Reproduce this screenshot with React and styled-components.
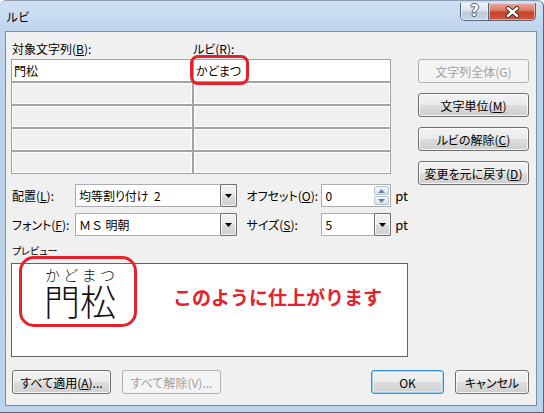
import React from "react";
import styled, { createGlobalStyle } from "styled-components";

const Global = createGlobalStyle`
  html, body { margin: 0; padding: 0; }
  body {
    width: 544px; height: 413px; overflow: hidden;
    font-family: "Noto Sans CJK JP", "Noto Sans", sans-serif;
    font-size: 12px; color: #000;
    font-feature-settings: "palt";
  }
  * { box-sizing: border-box; }
  u { text-underline-offset: 1px; }
`;

const Window = styled.div`
  width: 544px; height: 413px;
  display: flex; flex-direction: column;
  padding: 0 6px 6px 5px;
  border-top: 1px solid #8b9ab0;
  border-right: 1px solid #56667a;
  border-bottom: 1px solid #56667a;
  border-radius: 6px 6px 0 0;
  background: linear-gradient(180deg, #d0e1f4 0px, #bed5ee 30px, #b9d1ea 120px, #bcd3ec 100%);
`;

const TitleBar = styled.div`
  height: 30px; flex: none;
  display: flex; align-items: flex-start; justify-content: space-between;
`;

const TitleText = styled.div`
  padding: 6px 0 0 1px;
  line-height: 20px; font-size: 12px;
  font-feature-settings: normal;
  color: #000;
`;

const Caption = styled.div`
  margin: 2px 1px 0 0;
  height: 18px;
  display: flex;
  border: 1px solid #58677b;
  border-top: none;
  border-radius: 0 0 5px 5px;
  overflow: hidden;
`;

const CaptionButton = styled.div`
  width: ${(p) => p.$w}px;
  height: 100%;
  display: flex; align-items: center; justify-content: center;
  background: ${(p) =>
    p.$close
      ? "linear-gradient(180deg, #e9a99c 0%, #dc806c 40%, #c7452e 55%, #d0553c 100%)"
      : "linear-gradient(180deg, #eef3f9 0%, #d9e3ee 45%, #bccada 55%, #c9d6e4 100%)"};
  border-left: ${(p) => (p.$close ? "1px solid #58677b" : "none")};
  box-shadow: inset 0 0 0 1px rgba(255,255,255,0.45);
`;

const HelpGlyph = styled.span`
  font-family: "DejaVu Sans", sans-serif;
  font-weight: bold; font-size: 15px; line-height: 1;
  color: #fff;
  text-shadow: -1px 0 #4d5a6b, 1px 0 #4d5a6b, 0 -1px #4d5a6b, 0 1px #4d5a6b;
`;

const Body = styled.div`
  flex: 1;
  display: flex; flex-direction: column;
  border: 1px solid #7d8ea3;
  background: #f0f0f0;
  padding: 8px 7px 11px 5px;
`;

const Main = styled.div`
  display: flex;
`;

const LeftCol = styled.div`
  width: 397px;
  display: flex; flex-direction: column;
`;

const RightCol = styled.div`
  width: 111px; margin-left: 10px; margin-top: 19px;
  display: flex; flex-direction: column; gap: 10px;
`;

const HeaderLabels = styled.div`
  height: 19px; padding-left: 1px;
  display: grid; grid-template-columns: 181px 1fr;
  line-height: 17px;
`;

const Text = styled.span`
  white-space: nowrap;
`;

const RubyGrid = styled.div`
  width: 380px;
  display: grid;
  grid-template-columns: 180px 196px;
  grid-auto-rows: 21px;
  gap: 2px;
  border: 1px solid #a3a3a3;
  background: #a3a3a3;
`;

const Cell = styled.div`
  position: relative;
  display: flex; align-items: center;
  padding-left: 2px;
  background: ${(p) => (p.$active ? "#fff" : "#f0f0f0")};
  box-shadow: ${(p) => (p.$active ? "none" : "inset 0 0 0 1px #fff")};
`;

const Mark = styled.div`
  position: absolute;
  left: ${(p) => p.$l}px; top: ${(p) => p.$t}px;
  width: ${(p) => p.$w}px; height: ${(p) => p.$h}px;
  border: 3px solid #e5222b;
  border-radius: ${(p) => p.$r}px;
  pointer-events: none; z-index: 2;
`;

const Controls = styled.div`
  margin-top: 10px;
  display: flex; flex-direction: column; gap: 6px;
`;

const ControlRow = styled.div`
  height: 23px; padding-left: 1px;
  display: flex; align-items: center;
`;

const FieldLabel = styled.div`
  width: ${(p) => p.$w}px;
  margin-left: ${(p) => p.$ml || 0}px;
  white-space: nowrap;
`;

const Field = styled.div`
  width: ${(p) => p.$w}px; height: 100%;
  display: flex; align-items: stretch;
  border: 1px solid #abadb3;
  background: #fff;
`;

const FieldValue = styled.div`
  flex: 1;
  display: flex; align-items: center;
  padding-left: ${(p) => p.$pl || 3}px;
  font-feature-settings: ${(p) => (p.$wide ? "normal" : "palt")};
  white-space: pre;
`;

const DropButton = styled.div`
  width: 17px;
  margin: -1px -1px -1px 0;
  display: flex; align-items: center; justify-content: center;
  border: 1px solid #707070;
  border-radius: 2px;
  background: linear-gradient(180deg, #f2f2f2 0%, #ebebeb 50%, #dddddd 50%, #cfcfcf 100%);
  box-shadow: inset 0 0 0 1px rgba(255,255,255,0.7);
`;

const Spin = styled.div`
  width: 16px;
  display: flex; flex-direction: column;
  padding: 1px 1px 1px 0;
  gap: 1px;
`;

const SpinHalf = styled.div`
  flex: 1;
  display: flex; align-items: center; justify-content: center;
  border: 1px solid #b6c3d2;
  border-radius: 2px;
  background: linear-gradient(180deg, #f6f8fb 0%, #e6edf5 50%, #d7e1ec 100%);
`;

const Unit = styled.div`
  margin-left: 4px;
  font-size: 13px;
`;

const PreviewLabel = styled.div`
  margin-top: 8px; margin-bottom: 5px;
  padding-left: 1px;
  line-height: 14px; font-size: 10px;
`;

const PreviewBox = styled.div`
  position: relative;
  height: 94px;
  border: 1px solid #646464;
  background: #fff;
  display: flex; align-items: flex-start;
`;

const RubyBlock = styled.div`
  margin: 3px 0 0 32px;
  width: 72px;
  display: flex; flex-direction: column;
`;

const RubyText = styled.div`
  height: 16px; line-height: 16px; font-size: 15px;
  font-weight: 300;
  color: #111;
  font-feature-settings: normal;
  display: flex; justify-content: space-between;
  padding: 0 1px;
`;

const BaseText = styled.div`
  height: 34px; line-height: 34px; font-size: 36px;
  font-weight: 300;
  color: #111;
  font-feature-settings: normal;
  white-space: nowrap;
`;

const Note = styled.div`
  margin: 22px 0 0 57px;
  line-height: 22px; font-size: 19px; font-weight: bold;
  color: #e5222b;
  font-feature-settings: normal;
  white-space: nowrap;
`;

const Footer = styled.div`
  margin-top: 13px;
  display: flex; justify-content: space-between;
`;

const Group = styled.div`
  display: flex; gap: 11px;
  padding-left: ${(p) => p.$pl || 0}px;
`;

const Button = styled.div`
  width: ${(p) => (p.$w ? `${p.$w}px` : "100%")};
  height: 24px;
  display: flex; align-items: center; justify-content: center;
  border-radius: 3px;
  white-space: nowrap;
  border: 1px solid ${(p) => (p.$disabled ? "#adb2b5" : p.$default ? "#3c8fd0" : "#707070")};
  color: ${(p) => (p.$disabled ? "#a0a0a0" : "#000")};
  background: ${(p) =>
    p.$disabled
      ? "#f4f4f4"
      : "linear-gradient(180deg, #f2f2f2 0%, #ebebeb 50%, #dddddd 50%, #cfcfcf 100%)"};
  box-shadow: ${(p) =>
    p.$disabled
      ? "none"
      : p.$default
      ? "inset 0 0 0 1px #9bd3f5, inset 0 0 0 2px rgba(255,255,255,0.4)"
      : "inset 0 0 0 1px rgba(255,255,255,0.75)"};
`;

const Arrow = ({ up, color = "#000" }) => (
  <svg width="7" height="4" viewBox="0 0 7 4">
    <path d={up ? "M0 4 L3.5 0 L7 4 Z" : "M0 0 L7 0 L3.5 4 Z"} fill={color} />
  </svg>
);

const CloseIcon = () => (
  <svg width="15" height="12" viewBox="0 0 15 12">
    <path d="M3 2.2 L12 9.8 M12 2.2 L3 9.8" stroke="#4a2018" strokeWidth="4.4" strokeLinecap="round" />
    <path d="M3 2.2 L12 9.8 M12 2.2 L3 9.8" stroke="#fff" strokeWidth="2.6" strokeLinecap="round" />
  </svg>
);

const Select = ({ w, children, wide }) => (
  <Field $w={w}>
    <FieldValue $wide={wide}>{children}</FieldValue>
    <DropButton><Arrow /></DropButton>
  </Field>
);

export default function App() {
  return (
    <>
      <Global />
      <Window>
        <TitleBar>
          <TitleText>ルビ</TitleText>
          <Caption>
            <CaptionButton $w={27}><HelpGlyph>?</HelpGlyph></CaptionButton>
            <CaptionButton $w={47} $close><CloseIcon /></CaptionButton>
          </Caption>
        </TitleBar>
        <Body>
          <Main>
            <LeftCol>
              <HeaderLabels>
                <Text>対象文字列(<u>B</u>):</Text>
                <Text>ルビ(<u>R</u>):</Text>
              </HeaderLabels>
              <RubyGrid>
                <Cell $active>門松</Cell>
                <Cell $active>
                  かどまつ
                  <Mark $l={-4} $t={-5} $w={59} $h={30} $r={8} />
                </Cell>
                {Array.from({ length: 8 }).map((_, i) => (
                  <Cell key={i} />
                ))}
              </RubyGrid>
              <Controls>
                <ControlRow>
                  <FieldLabel $w={63}>配置(<u>L</u>):</FieldLabel>
                  <Select w={162}>{"均等割り付け  2"}</Select>
                  <FieldLabel $w={75} $ml={10}>オフセット(<u>O</u>):</FieldLabel>
                  <Field $w={70}>
                    <FieldValue>0</FieldValue>
                    <Spin>
                      <SpinHalf><Arrow up color="#6a84a8" /></SpinHalf>
                      <SpinHalf><Arrow color="#6a84a8" /></SpinHalf>
                    </Spin>
                  </Field>
                  <Unit>pt</Unit>
                </ControlRow>
                <ControlRow>
                  <FieldLabel $w={63}>フォント(<u>F</u>):</FieldLabel>
                  <Select w={162} wide>ＭＳ 明朝</Select>
                  <FieldLabel $w={75} $ml={10}>サイズ(<u>S</u>):</FieldLabel>
                  <Select w={70}>5</Select>
                  <Unit>pt</Unit>
                </ControlRow>
              </Controls>
              <PreviewLabel>プレビュー</PreviewLabel>
              <PreviewBox>
                <Mark $l={7} $t={-8} $w={118} $h={71} $r={15} />
                <RubyBlock>
                  <RubyText>
                    <span>か</span><span>ど</span><span>ま</span><span>つ</span>
                  </RubyText>
                  <BaseText>門松</BaseText>
                </RubyBlock>
                <Note>このように仕上がります</Note>
              </PreviewBox>
            </LeftCol>
            <RightCol>
              <Button $disabled>文字列全体(G)</Button>
              <Button>文字単位(<u>M</u>)</Button>
              <Button>ルビの解除(<u>C</u>)</Button>
              <Button>変更を元に戻す(<u>D</u>)</Button>
            </RightCol>
          </Main>
          <Footer>
            <Group $pl={1}>
              <Button $w={99}>すべて適用(<u>A</u>)...</Button>
              <Button $w={99} $disabled>すべて解除(V)...</Button>
            </Group>
            <Group>
              <Button $w={73} $default>OK</Button>
              <Button $w={74}>キャンセル</Button>
            </Group>
          </Footer>
        </Body>
      </Window>
    </>
  );
}
